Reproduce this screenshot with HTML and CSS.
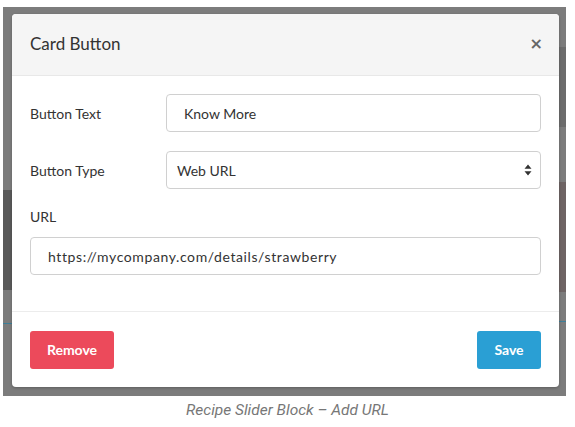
FILE: index.html
```html
<!DOCTYPE html>
<html>
<head>
<meta charset="utf-8">
<link rel="stylesheet" href="styles.css">
</head>
<body>
<div class="shot">
  <div class="backdrop">
    <div class="modal">
      <div class="modal-header">
        <h4 class="modal-title">Card Button</h4>
        <span class="close">&times;</span>
      </div>
      <div class="modal-body">
        <div class="row">
          <label class="row-label">Button Text</label>
          <div class="field field-wide">Know More</div>
        </div>
        <div class="row">
          <label class="row-label">Button Type</label>
          <div class="field field-select">
            <span>Web URL</span>
            <svg class="arrows" width="8" height="12" viewBox="0 0 8 12"><path d="M4 0.5 L7.5 4.8 L0.5 4.8 Z M4 11.5 L7.5 7.2 L0.5 7.2 Z" fill="#333"/></svg>
          </div>
        </div>
        <div class="group">
          <label class="group-label">URL</label>
          <div class="field field-url">https://mycompany.com/details/strawberry</div>
        </div>
      </div>
      <div class="modal-footer">
        <button class="btn btn-remove">Remove</button>
        <button class="btn btn-save">Save</button>
      </div>
    </div>
  </div>
  <p class="caption">Recipe Slider Block – Add URL</p>
</div>
</body>
</html>
```
FILE: styles.css
```css
html, body {
  margin: 0;
  padding: 0;
  background: #ffffff;
}
.shot {
  width: 575px;
  height: 427px;
  padding-top: 7px;
  box-sizing: border-box;
}
.backdrop {
  margin-left: 3px;
  width: 563px;
  height: 389px;
  box-sizing: border-box;
  padding: 7px 7px 9px 9px;
  background:
    linear-gradient(to bottom, transparent 183px, #5a5a5a 183px, #5a5a5a 283px, transparent 283px) left top / 9px 100% no-repeat,
    linear-gradient(to bottom, transparent 316px, #3d7f99 316px, #3d7f99 317px, transparent 317px) left top / 9px 100% no-repeat,
    linear-gradient(to bottom, transparent 40px, #6c6c6c 40px, #6c6c6c 120px, transparent 120px) right top / 7px 100% no-repeat,
    linear-gradient(to bottom, transparent 175px, #6e6464 175px, #6e6464 285px, transparent 285px) right top / 7px 100% no-repeat,
    linear-gradient(to bottom, transparent 314px, #3d7f99 314px, #3d7f99 315px, transparent 315px) right top / 7px 100% no-repeat,
    #7c7c7c;
}
.modal {
  width: 547px;
  height: 373px;
  background: #ffffff;
  border-radius: 4px;
  box-shadow: 0 1px 3px rgba(0, 0, 0, 0.25);
  overflow: hidden;
  font-family: Lato, "Open Sans", sans-serif;
  color: #333333;
  display: flex;
  flex-direction: column;
}
.modal-header {
  height: 62px;
  box-sizing: border-box;
  background: #f5f5f5;
  border-bottom: 1px solid #e8e8e8;
  display: flex;
  align-items: center;
  justify-content: space-between;
  padding: 0 18px 2px 18px;
}
.modal-title {
  margin: 0;
  font-size: 17px;
  font-weight: 400;
  color: #333333;
}
.close {
  font-family: "DejaVu Sans", sans-serif;
  font-size: 16px;
  font-weight: bold;
  color: #666666;
  line-height: 1;
  margin-right: -2px;
}
.modal-body {
  padding: 18px 18px 18px 18px;
  display: flex;
  flex-direction: column;
  gap: 19px;
}
.row {
  display: flex;
  align-items: center;
}
.row-label {
  width: 136px;
  font-size: 14px;
  flex: none;
}
.field {
  flex: 1;
  height: 38px;
  box-sizing: border-box;
  border: 1px solid #d0d0d0;
  border-radius: 4px;
  font-size: 14px;
  display: flex;
  align-items: center;
  padding: 0 17px;
  color: #333333;
  background: #ffffff;
}
.field-select {
  justify-content: space-between;
  padding: 0 8px 0 10px;
}
.field-url {
  flex: none;
  letter-spacing: 0.6px;
}
.arrows {
  display: block;
}
.group {
  display: flex;
  flex-direction: column;
  gap: 10px;
  margin-top: -1px;
  padding-bottom: 18px;
}
.group-label {
  font-size: 14px;
  line-height: 20px;
}
.modal-footer {
  flex: 1;
  border-top: 1px solid #ececec;
  display: flex;
  align-items: center;
  justify-content: space-between;
  padding: 0 18px;
}
.btn {
  height: 38px;
  border: none;
  border-radius: 3px;
  color: #ffffff;
  font-family: Lato, "Open Sans", sans-serif;
  font-size: 14px;
  font-weight: 700;
  padding: 0;
}
.btn-remove {
  width: 84px;
  background: #ec4a5b;
}
.btn-save {
  width: 64px;
  background: #2a9fd4;
}
.caption {
  margin: 5px 0 0 0;
  text-align: center;
  font-family: Roboto, sans-serif;
  font-style: italic;
  font-size: 15.5px;
  line-height: 19px;
  color: #777777;
}
```
